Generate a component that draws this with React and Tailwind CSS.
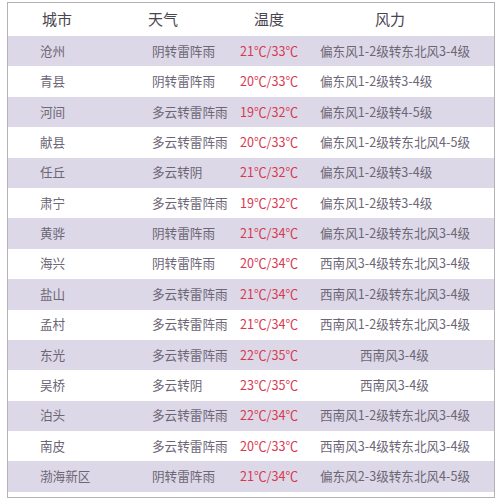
import React from "react";

const rows = [
  ["沧州", "阴转雷阵雨", "21℃/33℃", "偏东风1-2级转东北风3-4级"],
  ["青县", "阴转雷阵雨", "20℃/33℃", "偏东风1-2级转3-4级"],
  ["河间", "多云转雷阵雨", "19℃/32℃", "偏东风1-2级转4-5级"],
  ["献县", "多云转雷阵雨", "20℃/33℃", "偏东风1-2级转东北风4-5级"],
  ["任丘", "多云转阴", "21℃/32℃", "偏东风1-2级转3-4级"],
  ["肃宁", "多云转雷阵雨", "19℃/32℃", "偏东风1-2级转3-4级"],
  ["黄骅", "阴转雷阵雨", "21℃/34℃", "偏东风1-2级转东北风3-4级"],
  ["海兴", "阴转雷阵雨", "20℃/34℃", "西南风3-4级转东北风3-4级"],
  ["盐山", "多云转雷阵雨", "21℃/34℃", "西南风1-2级转东北风3-4级"],
  ["孟村", "多云转雷阵雨", "21℃/34℃", "西南风1-2级转东北风3-4级"],
  ["东光", "多云转雷阵雨", "22℃/35℃", "西南风3-4级", true],
  ["吴桥", "多云转阴", "23℃/35℃", "西南风3-4级", true],
  ["泊头", "多云转雷阵雨", "22℃/34℃", "西南风1-2级转东北风3-4级"],
  ["南皮", "多云转雷阵雨", "20℃/33℃", "西南风3-4级转东北风3-4级"],
  ["渤海新区", "阴转雷阵雨", "21℃/34℃", "偏东风2-3级转东北风4-5级"],
];

const font = { fontFamily: '"Noto Sans CJK SC", "Noto Sans", sans-serif' };

export default function App() {
  return (
    <div className="w-[500px] h-[503px] bg-white pt-[2px] pl-[7px]" style={font}>
      <div className="w-[488px] h-[496px] border border-[#b4b1b8] bg-white flex flex-col">
        <div className="flex h-[33px] items-center text-[15px] text-[#4a4450]">
          <div className="w-[112px] pl-[34px]">城市</div>
          <div className="w-[110px] pl-[28px]">天气</div>
          <div className="w-[80px] pl-[24px]">温度</div>
          <div className="flex-1 pl-[65px]">风力</div>
        </div>
        {rows.map((r, i) => (
          <div
            key={r[0]}
            className={`flex h-[30.4px] items-center text-[12.6px] text-[#6c6676] ${
              i % 2 === 0 ? "bg-[#dcd8e7]" : "bg-white"
            }`}
          >
            <div className="w-[112px] pl-[32px]">{r[0]}</div>
            <div className="w-[110px] pl-[32px]">{r[1]}</div>
            <div className="w-[80px] pl-[10px] text-[#d8394f]">{r[2]}</div>
            <div className={`flex-1 ${r[4] ? "pl-[50px]" : "pl-[10px]"}`}>{r[3]}</div>
          </div>
        ))}
      </div>
    </div>
  );
}
